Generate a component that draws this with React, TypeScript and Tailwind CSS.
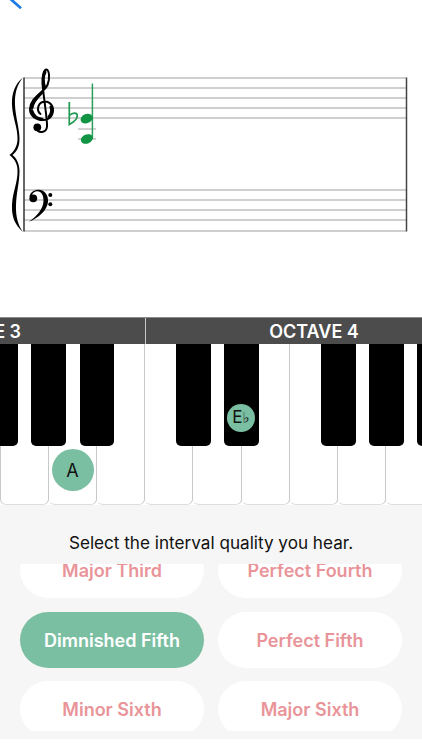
export default function App() {
  const font = "font-['Inter','Noto_Sans',sans-serif]";
  return (
    <div className={`flex h-[750px] w-[422px] flex-col overflow-hidden bg-white ${font}`}>
      <Staff />
      <Keyboard />
      <div className="h-[234px] shrink-0 bg-[#f6f6f6]">
        <div className="flex h-[59px] justify-center pt-[15px]">
          <p className="text-[17.15px] leading-[45px] text-[#111]">Select the interval quality you hear.</p>
        </div>
        <div className="h-[167px] overflow-hidden">
          <div className="-mt-[22px] grid grid-cols-2 gap-x-[14px] gap-y-[13.5px] px-5">
            <Choice label="Major Third" />
            <Choice label="Perfect Fourth" />
            <Choice label="Dimnished Fifth" active />
            <Choice label="Perfect Fifth" />
            <Choice label="Minor Sixth" />
            <Choice label="Major Sixth" />
          </div>
        </div>
      </div>
    </div>
  );
}

function Choice({ label, active }: { label: string; active?: boolean }) {
  return (
    <div
      className={
        active
          ? "flex h-14 items-center justify-center rounded-[28px] bg-[#7bbfa2] pt-px text-[18px] font-semibold text-white [font-variant-ligatures:none]"
          : "flex h-14 items-center justify-center rounded-[28px] bg-white pt-px text-[18px] font-semibold text-[#e99499] [font-variant-ligatures:none]"
      }
    >
      {label}
    </div>
  );
}

function Staff() {
  const treble = [78, 88, 98, 108, 118];
  const bass = [190, 200, 210, 220, 231];
  return (
    <svg viewBox="0 0 422 317" className="h-[317px] w-[422px] shrink-0">
      <path d="M10.5 -1 L21 8.3" stroke="#1a7ae6" strokeWidth="2.7" fill="none" />
      {[...treble, ...bass].map((y) => (
        <line key={y} x1="24" x2="406" y1={y} y2={y} stroke="#bfbfbf" strokeWidth="1.4" />
      ))}
      <line x1="24" x2="24" y1="77.5" y2="231.5" stroke="#333" strokeWidth="1.5" />
      <line x1="406.5" x2="406.5" y1="77.5" y2="231.5" stroke="#444" strokeWidth="1.5" />
      {/* brace */}
      <path
        d="M23 77.5 C15 84 11.5 93 12 105 C12.5 118 18 128 17.5 140 C17 147 13.5 152 9.5 155 C13.5 158 17.5 163 17.5 170 C18 182 12.5 192 12 205 C11.5 217 15 225 23 232 C18.5 226 15.5 217 16 205 C16.5 192 19.5 182 19.5 171 C19.5 164 16.5 158 12.5 155 C16.5 152 19.5 147 19.5 139 C19.5 128 15.5 117 15 105 C14.5 93 17 85 23 77.5 Z"
        fill="#000"
      />
      {/* treble clef */}
      <g fill="none" stroke="#000" strokeLinecap="round">
        <path
          d="M36 128 C38 134 46.5 133 47 126.5 C47.5 121 44 100 42.5 84 C42 76 44 69.5 46.3 69.5 C49.5 70 50 79 47.5 85 C44.5 92 30.5 97 30 109 C30 116 36 120 43 120 C50 120 53.5 114.5 53 109 C52.3 103 46.5 100.5 42.5 102 C37.5 104 36.5 111 40.5 114"
          strokeWidth="2"
        />
        <path d="M45 72 C43 76 43 82 44.5 87 M32 108 C32.5 101 38.5 96 42.5 92 M32 111 C33 115 37 118.5 42 119.3 M49 117 C51.5 114 52 110 51 107" strokeWidth="3" />
      </g>
      <circle cx="37.3" cy="127.3" r="3.9" fill="#000" />
      {/* bass clef */}
      <path
        d="M29.5 197 C30 192 34.5 189.8 38.5 189.8 C45 190 48.5 195.5 48 202 C47 211 38 218 29 221.8 C37 216 43.2 209 43.5 201 C43.7 195 41 191 37 191.3 C34 191.6 32 193.5 32 195.5 Z"
        fill="#000"
      />
      <circle cx="33.3" cy="198.3" r="3.9" fill="#000" />
      <circle cx="50.3" cy="195" r="2" fill="#000" />
      <circle cx="50.3" cy="204.3" r="2" fill="#000" />
      {/* notes */}
      <line x1="78" x2="96" y1="129" y2="129" stroke="#bfbfbf" strokeWidth="1.4" />
      <line x1="78" x2="96" y1="139" y2="139" stroke="#bfbfbf" strokeWidth="1.4" />
      <line x1="92.4" x2="92.4" y1="83.5" y2="139" stroke="#2a9d58" strokeWidth="1.5" />
      <ellipse cx="86.6" cy="118.6" rx="6.2" ry="4.6" transform="rotate(-22 86.6 118.6)" fill="#119443" />
      <ellipse cx="86.8" cy="139" rx="6.2" ry="4.6" transform="rotate(-22 86.8 139)" fill="#119443" />
      <path d="M69.3 102 V124.5 C73 122.5 77.5 119.5 77.3 115.5 C77 112 72.5 112.5 69.3 115.5" fill="none" stroke="#1f9a50" strokeWidth="1.7" />
    </svg>
  );
}

function WhiteKey({ first }: { first?: boolean }) {
  return (
    <div
      className={
        first
          ? "h-full w-[48.5px] shrink-0 rounded-b-[6px] border-x border-b border-x-[#c8c8c8] border-b-[#dedede] bg-white"
          : "h-full w-[48.25px] shrink-0 rounded-b-[6px] border-r border-b border-r-[#c8c8c8] border-b-[#dedede] bg-white"
      }
    />
  );
}

function Keyboard() {
  const bar = "flex w-[338px] shrink-0 items-center justify-center text-[18px] font-semibold text-white";
  const black = "absolute top-0 h-[102px] rounded-b-[5px] bg-black";
  return (
    <div className="h-[188px] w-[422px] shrink-0 overflow-hidden">
      <div className="flex h-[27px] border-t border-t-[#8a8a8a] bg-[#4c4c4c]">
        <div className={`-ml-[192px] ${bar} border-r border-r-[#c8c8c8]`}>OCTAVE 3</div>
        <div className={`${bar} pr-[2px]`}>OCTAVE 4</div>
      </div>
      <div className="relative h-[161px]">
        <div className="flex h-full">
          <WhiteKey first />
          <WhiteKey />
          <WhiteKey />
          <WhiteKey />
          <WhiteKey />
          <WhiteKey />
          <WhiteKey />
          <WhiteKey />
          <WhiteKey />
        </div>
        <div className={`${black} -left-[17px] w-[34.5px]`} />
        <div className={`${black} left-[31px] w-[34.5px]`} />
        <div className={`${black} left-[79.5px] w-[34.5px]`} />
        <div className={`${black} left-[176px] w-[34.5px]`} />
        <div className={`${black} left-[224px] w-[34.5px]`} />
        <div className={`${black} left-[321px] w-[34.5px]`} />
        <div className={`${black} left-[369px] w-[34.5px]`} />
        <div className={`${black} left-[417px] w-[34.5px]`} />
        <div className="absolute left-[51.5px] top-[105px] flex size-[42px] items-center justify-center rounded-full bg-[#7bbfa2] text-[18px] text-[#111]">
          A
        </div>
        <div className="absolute left-[227px] top-[60px] flex size-[28px] items-center justify-center rounded-full bg-[#7bbfa2] text-[17px] text-[#111]">
          E<span className="font-['DejaVu_Sans'] text-[15px]">♭</span>
        </div>
      </div>
    </div>
  );
}
